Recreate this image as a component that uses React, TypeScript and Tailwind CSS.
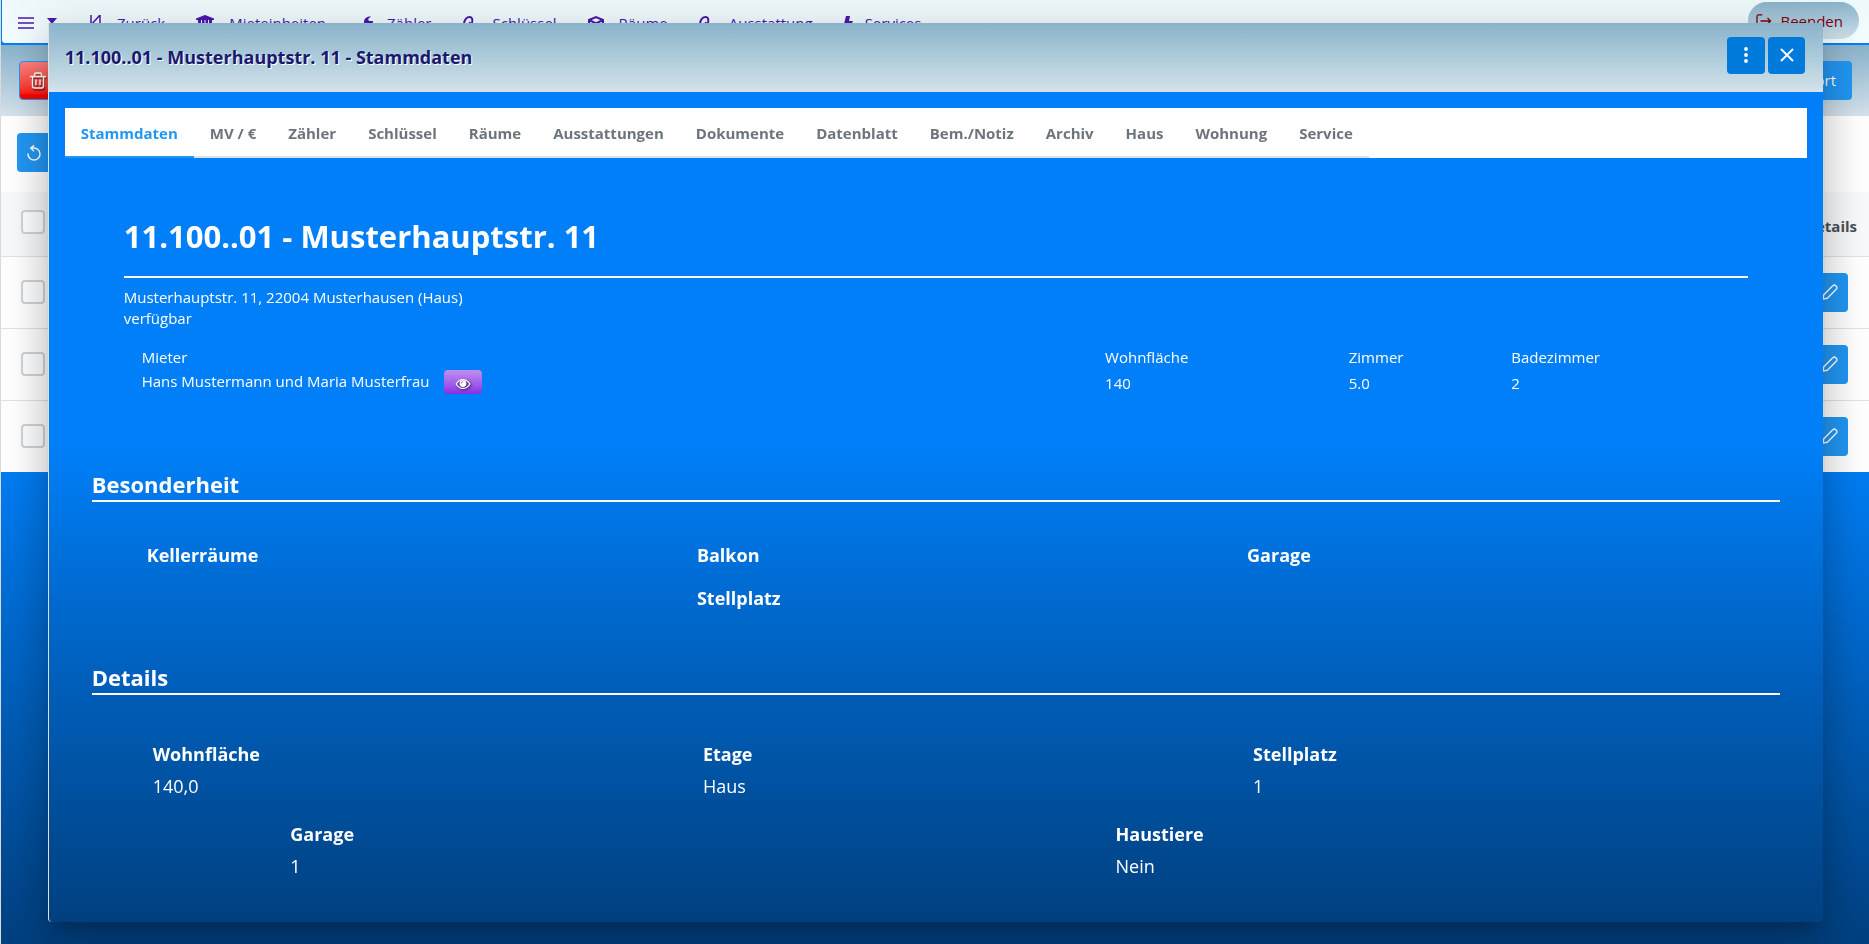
import type { ReactNode } from "react";

interface NavItem {
  label: string;
  iconBox: string;
  icon: ReactNode;
}

const PAPERCLIP = (
  <path d="M1 8C2 4 4 2 6.500 2S10 4.500 9 8l-2 6M5 15l2-8" fill="none" stroke="currentColor" strokeWidth="2" />
);

const NAV_ITEMS: NavItem[] = [
  {
    label: "Zurück",
    iconBox: "w-[27px]",
    icon: <path d="M1 0v16M1 10L10 0v16" fill="none" stroke="currentColor" strokeWidth="1.500" />,
  },
  {
    label: "Mieteinheiten",
    iconBox: "w-[33px]",
    icon: <path d="M9 0l9 3.500V5H0V3.500zM2 5h3v9H2zM6 5h2.500v9H6zM9.500 5H12v9H9.500zM13 5h3v9h-3zM0 15h18v2H0z" />,
  },
  {
    label: "Zähler",
    iconBox: "w-[30px]",
    icon: <path d="M14 1.500C10 1 7 3.500 7 7c0 1.500.5 2.500 1 3l-6 5 2 2 7-6c3 0 5-2 5-5h-4l-1-2z" />,
  },
  { label: "Schlüssel", iconBox: "w-[30px]", icon: PAPERCLIP },
  {
    label: "Räume",
    iconBox: "w-[31px]",
    icon: <path d="M1 5l7-3 7 3v9l-7 3-7-3zM1 5l7 3.500L15 5M8 8.500V17" fill="none" stroke="currentColor" strokeWidth="2" />,
  },
  { label: "Ausstattung", iconBox: "w-[30px]", icon: PAPERCLIP },
  {
    label: "Services",
    iconBox: "w-[21px]",
    icon: <path d="M2 1h4L5 6h4L4 17l1-8H0z" />,
  },
];

const TABS = [
  "Stammdaten", "MV / €", "Zähler", "Schlüssel", "Räume", "Ausstattungen", "Dokumente",
  "Datenblatt", "Bem./Notiz", "Archiv", "Haus", "Wohnung", "Service",
];

const FACTS = [
  { label: "Wohnfläche", value: "140" },
  { label: "Zimmer", value: "5.0" },
  { label: "Badezimmer", value: "2" },
];

const FEATURES = ["Kellerräume", "Balkon", "Garage", "Stellplatz"];

const DETAILS = [
  { label: "Wohnfläche", value: "140,0" },
  { label: "Etage", value: "Haus" },
  { label: "Stellplatz", value: "1" },
  { label: "Garage", value: "1" },
  { label: "Haustiere", value: "Nein" },
];

const BUTTON = "flex h-[39px] items-center justify-center rounded bg-[#2196f3] text-white";
const CHECKBOX = "block size-6 appearance-none rounded border-2 border-[#ced4da] bg-white";

function TrashIcon() {
  return (
    <svg viewBox="0 0 16 17" className="h-[17px] w-4 drop-shadow-[1px_2px_0_rgba(0,0,0,0.4)]" fill="none" stroke="currentColor" strokeWidth="1.400" aria-hidden="true">
      <path d="M0 4.500h16M2.500 4.500V14a2 2 0 0 0 2 2h7a2 2 0 0 0 2-2V4.500M4.500 4V2.500a1.500 1.500 0 0 1 1.500-1.500h4a1.500 1.500 0 0 1 1.500 1.500V4M6 7.500v5.500M10 7.500v5.500" />
    </svg>
  );
}

function RefreshIcon() {
  return (
    <svg viewBox="0 0 14 16" className="h-4 w-[14px]" fill="none" stroke="currentColor" strokeWidth="1.500" strokeLinecap="round" strokeLinejoin="round" aria-hidden="true">
      <path d="M1 9a6 6 0 1 0 6-6H3.500M6.500 .8L3.800 3l2.700 2.700" />
    </svg>
  );
}

function PencilIcon() {
  return (
    <svg viewBox="0 0 16 16" className="size-4" fill="none" stroke="currentColor" strokeWidth="1.400" strokeLinejoin="round" aria-hidden="true">
      <path d="M1 15l.8-4.300L10.800 1.700a2 2 0 0 1 3 0l.5.5a2 2 0 0 1 0 3L5.300 14.200z" />
    </svg>
  );
}

function EyeIcon() {
  return (
    <svg viewBox="0 0 18 14" className="h-3 w-4 drop-shadow-[1px_1px_1px_rgba(0,0,0,0.7)]" aria-hidden="true">
      <path d="M1 7c2-3.500 5-5.200 8-5.200S15 3.500 17 7c-2 3.500-5 5.200-8 5.200S3 10.500 1 7z" fill="none" stroke="currentColor" strokeWidth="1.400" />
      <circle cx="9" cy="6.500" r="4" fill="currentColor" />
      <path d="M6.800 6.500A2.200 2.200 0 0 1 9 4.300" fill="none" stroke="#9a50e0" strokeWidth="1" />
    </svg>
  );
}

function SectionTitle({ children }: { children: ReactNode }) {
  return (
    <h2 className="border-b-2 border-white pb-1 text-[22px] leading-6 font-bold">{children}</h2>
  );
}

/** Listenansicht hinter dem Dialog */
function UnitListPage() {
  return (
    <div>
      <header className="mb-px flex h-11 items-start justify-between rounded-bl border-b border-l border-[#007ff8] bg-linear-to-b from-[#eef9fc] to-[#f4fdff] text-[15px] leading-[22px]">
        <nav className="flex gap-[31px] pt-3 pl-4 text-[#4a18ad]">
          <button aria-label="Menü" className="mr-0.5 flex w-[39px] items-center justify-between">
            <svg viewBox="0 0 16 12" className="h-3 w-4" stroke="currentColor" strokeWidth="1.600" aria-hidden="true">
              <path d="M0 1h16M0 6h16M0 11h16" />
            </svg>
            <svg viewBox="0 0 10 6" className="mb-1 h-[6px] w-[10px]" fill="currentColor" aria-hidden="true">
              <path d="M0 0h10L5 6z" />
            </svg>
          </button>
          {NAV_ITEMS.map((item) => (
            <a key={item.label} href="#" className="flex">
              <span className={`${item.iconBox} pt-[3px]`}>
                <svg viewBox="0 0 18 18" className="size-[18px]" fill="currentColor" aria-hidden="true">
                  {item.icon}
                </svg>
              </span>
              {item.label}
            </a>
          ))}
        </nav>
        <button className="mt-0.5 mr-2.5 flex h-[37px] items-center gap-2 rounded-full bg-linear-to-b from-[#8ab3cb] to-[#d0e0ea] pr-4 pl-2 text-[#800010]">
          <svg viewBox="0 0 18 16" className="h-[14px] w-4" fill="none" stroke="currentColor" strokeWidth="1.500" aria-hidden="true">
            <path d="M7 1H3a2 2 0 0 0-2 2v10a2 2 0 0 0 2 2h4M5 8h12M13 4.500L16.500 8 13 11.500" />
          </svg>
          Beenden
        </button>
      </header>

      <div className="flex h-[71px] items-center justify-between bg-linear-to-b from-[#8ab3cb] to-[#d4e2ec] px-[17px]">
        <button aria-label="Löschen" className="ml-px flex h-[39px] w-[37px] items-center justify-center rounded border border-[#2196f3] bg-linear-to-b from-[#ff8080] to-[#ff0000] to-90% text-white">
          <TrashIcon />
        </button>
        <button className={`${BUTTON} px-4 text-[15px]`}>Export</button>
      </div>

      <div className="flex h-[76px] items-start bg-white px-4 pt-[17px]">
        <button aria-label="Zurücksetzen" className={`${BUTTON} w-[34px]`}>
          <RefreshIcon />
        </button>
      </div>

      <table className="w-full border-collapse bg-white text-[15px] text-[#495057]">
        <thead>
          <tr className="h-16 border-b border-[#dee2e6] bg-[#f8f9fa]">
            <th className="px-5 pb-1">
              <input type="checkbox" aria-label="Alle auswählen" className={CHECKBOX} />
            </th>
            <th className="px-3 pt-1 text-right font-bold">Details</th>
          </tr>
        </thead>
        <tbody>
          {[1, 2, 3].map((row) => (
            <tr key={row} className="h-[72px] border-b border-[#dee2e6] last:border-b-0">
              <td className="px-5">
                <input type="checkbox" aria-label={`Zeile ${row} auswählen`} className={CHECKBOX} />
              </td>
              <td className="pr-[21px]">
                <button aria-label="Bearbeiten" className={`${BUTTON} ml-auto w-9`}>
                  <PencilIcon />
                </button>
              </td>
            </tr>
          ))}
        </tbody>
      </table>
    </div>
  );
}

function UnitDialog() {
  return (
    <section
      role="dialog"
      aria-labelledby="dialog-title"
      className="flex w-[95vw] shrink-0 flex-col rounded-b border-l border-[#e0e0e0] bg-linear-to-b from-[#007ff8] from-[47%] to-[#004080] text-white shadow-[0_11px_15px_-7px_rgba(0,0,0,0.2),0_24px_38px_3px_rgba(0,0,0,0.14),0_9px_46px_8px_rgba(0,0,0,0.12)]"
    >
      <header className="flex items-start justify-between bg-linear-to-b from-[#8ab3cb] via-[#b8d3df] via-65% to-[#d4e2ec] pt-[14px] pr-[18px] pb-[18px] pl-4">
        <h1 id="dialog-title" className="pt-1.5 text-lg leading-7 font-bold text-[#191970] [text-shadow:1px_1px_0_#ffffff]">
          11.100..01 - Musterhauptstr. 11 - Stammdaten
        </h1>
        <div className="flex gap-[3px]">
          <button aria-label="Menü" className="flex h-[37px] w-[38px] items-center justify-center rounded bg-[#007bdc]">
            <svg viewBox="0 0 4 16" className="h-4 w-1" fill="currentColor" aria-hidden="true">
              <circle cx="2" cy="2" r="1.900" />
              <circle cx="2" cy="8" r="1.900" />
              <circle cx="2" cy="14" r="1.900" />
            </svg>
          </button>
          <button aria-label="Schließen" className="flex h-[37px] w-[37px] items-center justify-center rounded bg-[#007bdc]">
            <svg viewBox="0 0 14 14" className="size-[14px]" stroke="currentColor" strokeWidth="1.800" aria-hidden="true">
              <path d="M1 1l12 12M13 1L1 13" />
            </svg>
          </button>
        </div>
      </header>

      <div className="px-4 pt-4 pb-[21px]">
        <div className="flex bg-white">
          <div role="tablist" className="flex">
            {TABS.map((tab, i) => (
              <button
                key={tab}
                role="tab"
                aria-selected={i === 0}
                className={
                  i === 0
                    ? "h-[50px] border-b-2 border-[#2196f3] px-4 pt-[3px] text-[15px] font-bold text-[#2196f3]"
                    : "h-[50px] border-b-2 border-[#dee2e6] px-4 pt-[3px] text-[15px] font-bold text-[#6c757d]"
                }
              >
                {tab}
              </button>
            ))}
          </div>
        </div>

        <div className="mx-[59px] pt-[58px] text-[15px] leading-[21px]">
          <h2 className="border-b-2 border-white pb-5 text-[31px] leading-10 font-bold">
            11.100..01 - Musterhauptstr. 11
          </h2>
          <p className="mt-[9px]">Musterhauptstr. 11, 22004 Musterhausen (Haus)</p>
          <p>verfügbar</p>

          <dl className="mt-[18px] grid grid-cols-[593fr_150fr_100fr_157fr]">
            <div className="pl-[18px]">
              <dt>Mieter</dt>
              <dd className="mt-0.5 flex h-6 items-center gap-[14px]">
                Hans Mustermann und Maria Musterfrau
                <button aria-label="Mieter anzeigen" className="flex h-6 w-[38px] items-center justify-center rounded bg-linear-to-b from-[#c090f0] to-[#8a2be2] pt-1">
                  <EyeIcon />
                </button>
              </dd>
            </div>
            {FACTS.map((fact) => (
              <div key={fact.label} className="pl-[18px]">
                <dt>{fact.label}</dt>
                <dd className="mt-[3px] leading-6">{fact.value}</dd>
              </div>
            ))}
          </dl>
        </div>

        <div className="mx-[27px] mt-[77px]">
          <SectionTitle>Besonderheit</SectionTitle>
          <ul className="mx-[19px] flex flex-wrap justify-around pt-10 text-lg leading-[26px] font-bold">
            {FEATURES.map((feature) => (
              <li key={feature} className="w-1/3 pb-[17px] pl-9">{feature}</li>
            ))}
          </ul>
        </div>

        <div className="mx-[27px] mt-[37px]">
          <SectionTitle>Details</SectionTitle>
          <dl className="mx-[19px] flex flex-wrap justify-around pt-[46px] text-lg leading-[26px]">
            {DETAILS.map((detail) => (
              <div key={detail.label} className="w-1/3 pb-[22px] pl-[42px]">
                <dt className="font-bold">{detail.label}</dt>
                <dd className="mt-1.5">{detail.value}</dd>
              </div>
            ))}
          </dl>
        </div>
      </div>
    </section>
  );
}

export default function App() {
  return (
    <div className="min-h-screen border-l border-[#dcdcdc] bg-linear-to-b from-[#007ff8] from-[48%] to-[#004080] font-['Open_Sans','Noto_Sans',sans-serif]">
      <UnitListPage />
      <div className="fixed inset-0 flex items-center justify-center pl-0.5">
        <UnitDialog />
      </div>
    </div>
  );
}
